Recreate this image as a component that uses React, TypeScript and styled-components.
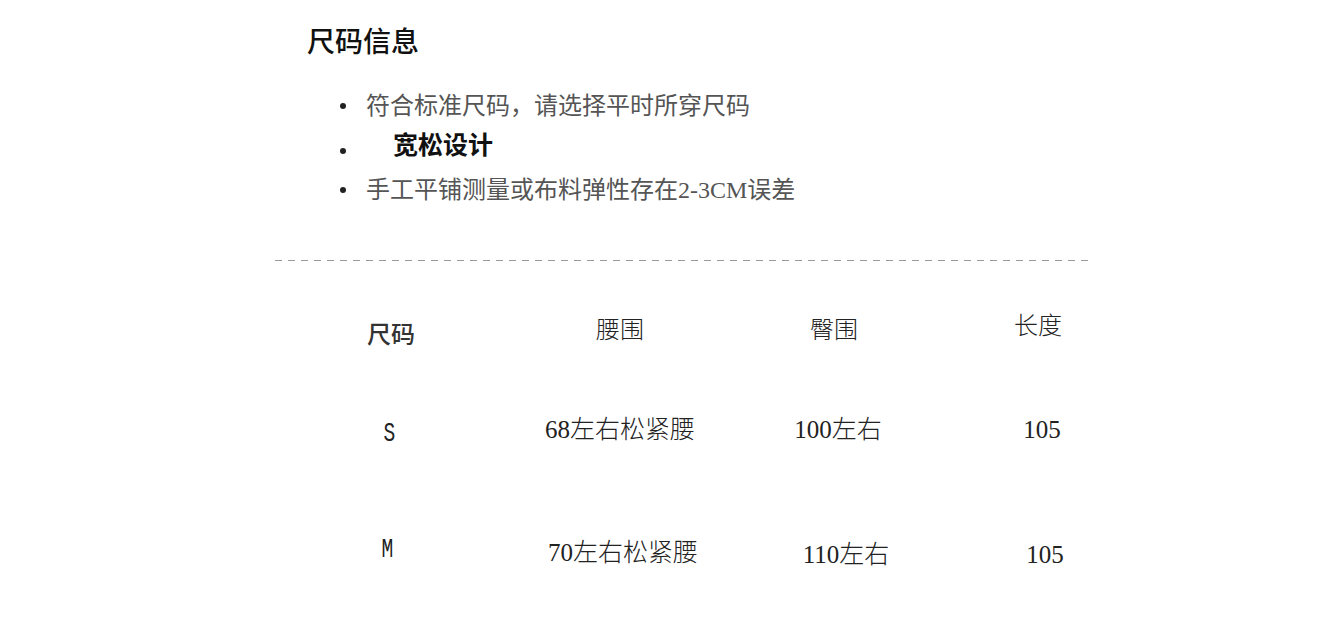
import styled, { createGlobalStyle } from 'styled-components'

const GlobalStyle = createGlobalStyle`
  html, body {
    margin: 0;
    padding: 0;
    background: #ffffff;
  }
  body {
    font-family: "Noto Sans CJK SC", "Liberation Sans", sans-serif;
    color: #222;
  }
`

const notes = [
  { text: '符合标准尺码，请选择平时所穿尺码', strong: false, indent: 0 },
  { text: '宽松设计', strong: true, indent: 27 },
  { text: '手工平铺测量或布料弹性存在2-3CM误差', strong: false, indent: 0 },
]

// dx / dy: small nudges so the cells sit where the photographed table has them
const header = [
  { label: '尺码', plain: true, dx: 2, dy: 5 },
  { label: '腰围', plain: false, dx: 0, dy: 0 },
  { label: '臀围', plain: false, dx: -4, dy: 0 },
  { label: '长度', plain: false, dx: -4, dy: -4 },
]

const rows = [
  { size: 'S', waist: '68左右松紧腰', hip: '100左右', length: '105', top: 62, dy: [3, -1, -1, -1], dx: [0, 0, 0, 0] },
  { size: 'M', waist: '70左右松紧腰', hip: '110左右', length: '105', top: 82, dy: [-3, 0, 2, 2], dx: [-2, 3, 8, 3] },
]

export default function App() {
  return (
    <>
      <GlobalStyle />
      <Page>
        <Title>尺码信息</Title>
        <NoteList>
          {notes.map((n) => (
            <Note key={n.text} $strong={n.strong} $indent={n.indent}>
              {n.text}
            </Note>
          ))}
        </NoteList>
        <Divider />
        <SizeTable>
          <Row $top={47}>
            {header.map((h) => (
              <HeadCell key={h.label} $plain={h.plain} style={{ transform: `translate(${h.dx}px, ${h.dy}px)` }}>
                {h.label}
              </HeadCell>
            ))}
          </Row>
          {rows.map((r) => (
            <Row key={r.size} $top={r.top}>
              {[r.size, r.waist, r.hip, r.length].map((v, i) => (
                <Cell key={i} $narrow={i === 0} style={{ transform: `translate(${r.dx[i]}px, ${r.dy[i]}px)` }}>
                  {i === 0 ? <SizeMark>{v}</SizeMark> : v}
                </Cell>
              ))}
            </Row>
          ))}
        </SizeTable>
      </Page>
    </>
  )
}

const Page = styled.main`
  width: 870px;
  padding: 22px 0 40px 275px;
  display: flex;
  flex-direction: column;
`

const Title = styled.h1`
  margin: 0 0 0 32px;
  font-family: "Noto Sans CJK SC", sans-serif;
  font-size: 28px;
  font-weight: 500;
  line-height: 36px;
  color: #111;
`

const NoteList = styled.ul`
  list-style: none;
  margin: 27px 0 0 0;
  padding: 0 0 0 91px;
`

const Note = styled.li<{ $strong: boolean; $indent: number }>`
  position: relative;
  height: 42px;
  line-height: ${(p) => (p.$strong ? 38 : 42)}px;
  padding-left: ${(p) => p.$indent}px;
  font-family: "Liberation Serif", "Noto Sans CJK SC", serif;
  font-size: ${(p) => (p.$strong ? 25 : 24)}px;
  font-weight: ${(p) => (p.$strong ? 700 : 400)};
  color: ${(p) => (p.$strong ? '#111' : '#555')};
  white-space: nowrap;

  &::before {
    content: '';
    position: absolute;
    left: -26px;
    top: ${(p) => (p.$strong ? 21 : 18)}px;
    width: 6px;
    height: 6px;
    border-radius: 50%;
    background: #222;
  }
`

const Divider = styled.hr`
  width: 813px;
  height: 1px;
  margin: 49px 0 0 0;
  border: 0;
  background: repeating-linear-gradient(to right, #9a9a9a 0 7px, transparent 7px 13px);
`

const SizeTable = styled.section`
  display: flex;
  flex-direction: column;
`

const Row = styled.div<{ $top: number }>`
  display: grid;
  grid-template-columns: 228px 234px 202px 206px;
  height: 40px;
  margin-top: ${(p) => p.$top}px;
  align-items: center;
`

const HeadCell = styled.div<{ $plain: boolean }>`
  text-align: center;
  font-family: "Noto Sans CJK SC", sans-serif;
  font-size: 24px;
  font-weight: ${(p) => (p.$plain ? 500 : 300)};
  color: ${(p) => (p.$plain ? '#333' : '#222')};
  line-height: 40px;
  white-space: nowrap;
`

const Cell = styled.div<{ $narrow: boolean }>`
  text-align: center;
  font-family: "Liberation Serif", "Noto Sans CJK SC", serif;
  font-size: 25px;
  font-weight: 300;
  color: #222;
  line-height: 40px;
  white-space: nowrap;
`

const SizeMark = styled.span`
  display: inline-block;
  font-family: "Liberation Mono", monospace;
  font-size: 28px;
  transform: scaleX(0.7);
  color: #222;
`
